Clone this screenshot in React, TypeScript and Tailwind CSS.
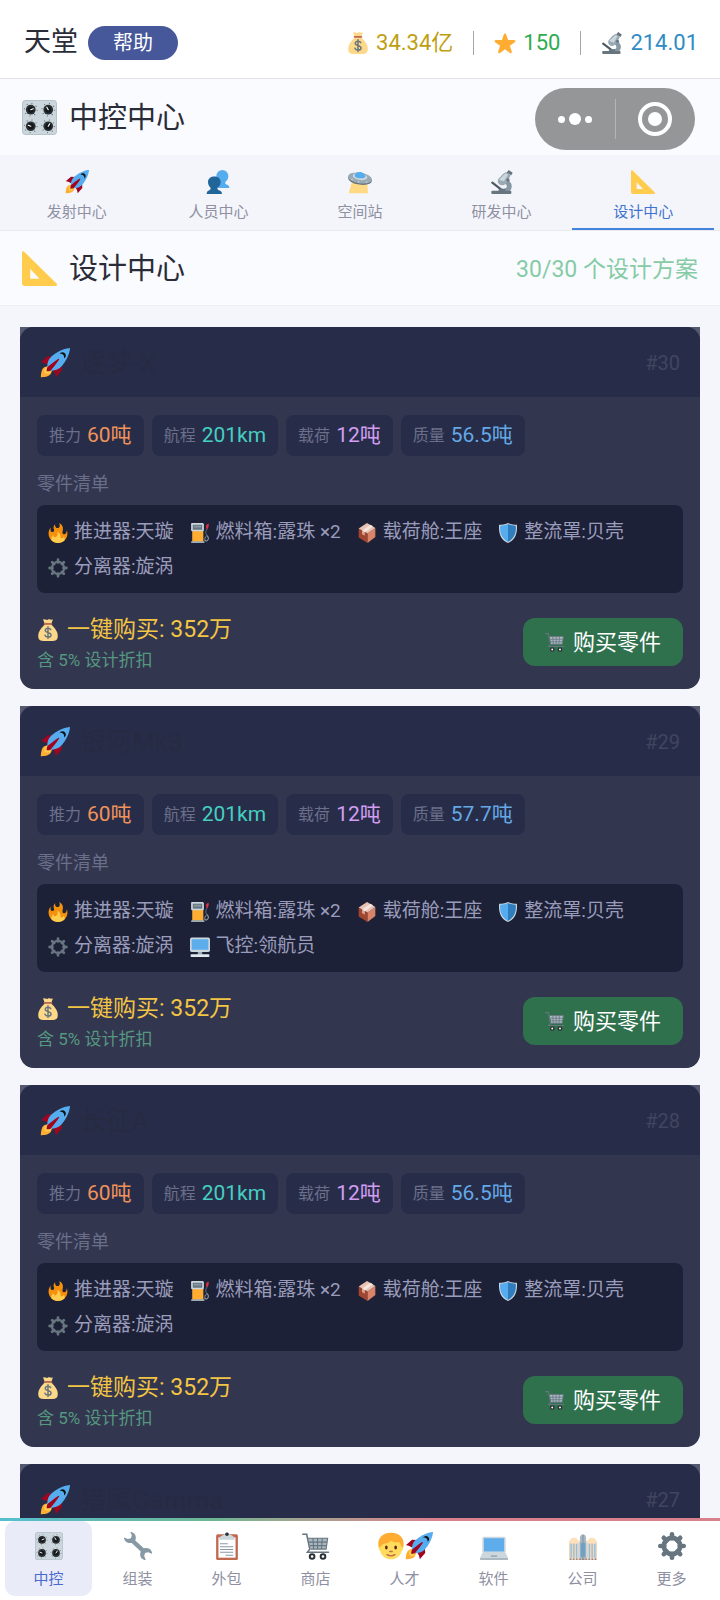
import React from 'react';

interface IconProps {
  className?: string;
}

const Svg: React.FC<IconProps & { children: React.ReactNode; viewBox?: string }> = ({
  className = '',
  viewBox = '0 0 36 36',
  children,
}) => (
  <svg viewBox={viewBox} className={`shrink-0 ${className}`} aria-hidden="true">
    {children}
  </svg>
);

const Rocket: React.FC<IconProps> = (props) => (
  <Svg {...props}>
    <path fill="#A0041E" d="M1 17l8-7 16 1 1 16-7 8s0-6-6-12-12-6-12-6z" />
    <path fill="#FFAC33" d="M1 35s0-8 3-11 11-2.800 11-2.800S15 29 12 32s-11 3-11 3z" />
    <circle fill="#FFCC4D" cx="9" cy="27" r="4" />
    <path fill="#55ACEE" d="M36 0S26 0 14 10c-6 5-6 14-4 16s11 2 16-4C36 10 36 0 36 0z" />
    <path fill="#111" d="M27 5c-1.620 0-3.010.970-3.640 2.360.500-.230 1.050-.360 1.640-.360 2.210 0 4 1.790 4 4 0 .590-.130 1.140-.360 1.640C30.030 12.010 31 10.620 31 9c0-2.210-1.790-4-4-4z" />
    <path fill="#A0041E" d="M8 28s0-4 1-5 13-11 14-10-9 13-10 14-5 1-5 1z" />
  </Svg>
);

const Knobs: React.FC<IconProps> = (props) => (
  <Svg {...props}>
    <rect width="36" height="36" rx="4" fill="#B5C3CB" />
    <rect x="1" y="1" width="34" height="34" rx="3" fill="#CCD6DD" />
    {[[9, 10], [27, 10], [9, 27], [27, 27]].map(([x, y]) => (
      <g key={`${x}-${y}`}>
        <circle cx={x} cy={y} r="6.500" fill="none" stroke="#66757F" strokeWidth="1.200" strokeDasharray="1 4.100" />
        <circle cx={x} cy={y} r="5" fill="#292F33" />
        <circle cx={x} cy={y} r="3" fill="#141719" />
      </g>
    ))}
    <g stroke="#fff" strokeWidth="1.200" strokeLinecap="round">
      <path d="M9 10l2.500-1M27 10l-1.500-2.500M9 27l-2.500-1M27 27l1.500-2.500" />
    </g>
  </Svg>
);

const MoneyBag: React.FC<IconProps> = (props) => (
  <Svg {...props}>
    <path fill="#FDD888" d="M13 9C8 13 2 20 2 28c0 6 3 8 8 8h16c5 0 8-2 8-8 0-8-6-15-11-19z" />
    <path fill="#FDD888" d="M10 1l3 8h10l3-8c-2-1-3 1-4 0s-3-1-4 0-3 0-4 0-2-1-4 0z" />
    <rect x="11" y="6.500" width="14" height="3" rx="1.500" fill="#BF6952" />
    <path
      fill="none"
      stroke="#67757F"
      strokeWidth="2.400"
      strokeLinecap="round"
      d="M22.500 17.500c-1-2-2.500-2.500-4.500-2.500-2.500 0-4.500 1.400-4.500 3.500 0 5 9.500 2.500 9.500 7.500 0 2.200-2.200 3.500-5 3.500-2.500 0-4.300-1-5-3M18 12.500v19.500"
    />
  </Svg>
);

const Star: React.FC<IconProps> = (props) => (
  <Svg {...props}>
    <path
      fill="#FFAC33"
      d="M27.300 34.600c-.400 0-.800-.100-1.150-.370L18 28.400l-8.130 5.830c-.700.500-1.600.500-2.310 0-.680-.500-.960-1.370-.710-2.170l3.070-9.700-8.130-5.730c-.690-.490-.980-1.370-.720-2.180.260-.800 1-1.350 1.840-1.360l10.100-.020 3.140-9.480c.270-.790 1.010-1.320 1.850-1.320s1.580.530 1.850 1.320l3.150 9.480 10.020.020c.840.010 1.580.560 1.840 1.360.260.810-.030 1.690-.720 2.180l-8.130 5.730 3.070 9.700c.250.800-.030 1.670-.710 2.170-.340.260-.750.380-1.160.380z"
    />
  </Svg>
);

const Microscope: React.FC<IconProps> = (props) => (
  <Svg {...props}>
    <path fill="#8899A6" d="M20 33h8c6-4 7-14-2-18l-4 5c5 3 4 8-2 9z" />
    <rect x="2" y="31" width="30" height="5" rx="1.500" fill="#67757F" />
    <path stroke="#4D5A63" strokeWidth="3.500" strokeLinecap="round" d="M3.500 19l13 10" />
    <path fill="#67757F" d="M13 28h10v4H13z" />
    <path fill="#99AAB5" d="M12 15c0-3 4-4 6-8l6-4 7 5-6 11c-3 4-7 5-10 3s-4-4-3-7z" />
    <path fill="#CCD6DD" d="M14 15c0-2 4-4 6-7l4-3 3 2-6 10z" />
    <path fill="#67757F" d="M25 4l3-4 6 4-2 4z" />
    <circle cx="27" cy="15" r="2.500" fill="#67757F" />
  </Svg>
);

const People: React.FC<IconProps> = (props) => (
  <Svg {...props}>
    <ellipse cx="24.500" cy="9.500" rx="9" ry="9.500" fill="#55ACEE" />
    <path fill="#55ACEE" d="M20 15h9v5c0 3 6 1 6 7H18z" />
    <path fill="#269" d="M3 18c0-11 19-11 19 0 0 4-2 7-5 9 0 5 7 2 7 9H1c0-7 6-4 6-9-2-2-4-5-4-9z" />
  </Svg>
);

const Saucer: React.FC<IconProps> = (props) => (
  <Svg {...props}>
    <path fill="#FFD983" d="M6 18L1 35h29l-1-14z" />
    <ellipse cx="18" cy="14" rx="18" ry="8" fill="#66757F" transform="rotate(8 18 14)" />
    <ellipse cx="18" cy="12" rx="18" ry="8" fill="#99AAB5" transform="rotate(8 18 12)" />
    <ellipse cx="18" cy="10" rx="11" ry="5" fill="#CCD6DD" transform="rotate(8 18 10)" />
    <path fill="#55ACEE" d="M10 9c0-9 16-7 16 1-2 4-15 3-16-1z" />
    <g fill="#CCD6DD">
      <circle cx="6" cy="14" r="1.200" />
      <circle cx="16" cy="18" r="1.200" />
      <circle cx="28" cy="18" r="1.200" />
    </g>
  </Svg>
);

const SetSquare: React.FC<IconProps> = (props) => (
  <Svg {...props}>
    <path
      fill="#FFCC4D"
      fillRule="evenodd"
      d="M2 .500C1 0 0 .500 0 2v31c0 2 1 3 3 3h31c2 0 2.500-1.500 1.500-2.500zM8.500 18.500l9.500 10h-9.500z"
    />
    <path stroke="#FFBE45" strokeWidth="1" d="M5 6l-2 2M10 11l-2 2M15 16l-2 2M20 21l-2 2M25 26l-2 2M30 31l-2 2" />
  </Svg>
);

const Fire: React.FC<IconProps> = (props) => (
  <Svg {...props}>
    <path
      fill="#F4900C"
      d="M35 19c0-2.060-.370-4.040-1.040-5.870-.460 5.390-3.330 8.160-6.330 6.870-2.820-1.200-.920-5.920-.780-8.160.240-3.810-.010-8.170-6.930-11.800 2.870 5.500.330 8.920-2.340 9.130-2.960.230-5.660-2.540-4.660-7.040-3.240 2.380-3.340 6.400-2.340 9 1.050 2.700-.040 4.950-2.580 5.200-2.840.280-4.420-3.040-2.960-8.330C2.520 10.960 1 14.800 1 19c0 9.390 7.610 17 17 17s17-7.610 17-17z"
    />
    <path
      fill="#FFCC4D"
      d="M28.400 24c.150 3.080-2.560 4.300-4.020 3.700-2.110-.840-1.540-2.290-2.090-5.290-.540-3-2.620-5.080-5.700-6 2.250 6.340-1.250 8.670-3.080 9.090-1.880.420-3.760 0-3.970-4.010C7.350 23.670 6 26.670 6 30c0 .370.020.730.050 1.090C9.120 34.120 13.340 36 18 36s8.870-1.880 11.940-4.910c.040-.360.060-.720.060-1.090 0-2.190-.590-4.240-1.600-6z"
    />
  </Svg>
);

const FuelPump: React.FC<IconProps> = (props) => (
  <Svg {...props}>
    <path fill="none" stroke="#66757F" strokeWidth="1.800" d="M25 31c7 5 10-3 6-8s-3-7 0-13" />
    <path fill="none" stroke="#99AAB5" strokeWidth="1.500" d="M27 31c-2-6 5-11 6-5 1 5-3 8-6 5z" />
    <path fill="#DD2E44" d="M29 4l4-3 1 3-2 7-3-1z" />
    <path fill="#FFAC33" d="M4 14h20v20H4z" />
    <path fill="#CCD6DD" d="M4 0h18c2 0 3 1 3 3v9c0 2-1 3-3 3H5c-2 0-3-1-3-3V3c0-2 0-3 2-3z" />
    <path fill="#66757F" d="M5 3h17v9H5z" />
    <path fill="#8899A6" d="M7 5h13v3H7z" />
    <rect x="2" y="33" width="24" height="3" rx="1" fill="#99AAB5" />
  </Svg>
);

const Crate: React.FC<IconProps> = (props) => (
  <Svg {...props}>
    <path fill="#A0452F" d="M3 10l16 9v17L3 26z" />
    <path fill="#D98468" d="M19 19l14-10v16L19 36z" />
    <path fill="#E8C3B4" d="M3 10L18 0l15 9-14 10z" />
    <path fill="#F7E6DE" d="M9 14L24 3l5 3-15 11z" />
    <path fill="#E3A592" d="M9 14l5 3v6l-5-3z" />
  </Svg>
);

const Shield: React.FC<IconProps> = (props) => (
  <Svg {...props}>
    <path fill="#CCD6DD" d="M18 0c6 3 11 3 16 3 1 12-1 27-16 33C3 30 1 15 2 3c5 0 10 0 16-3z" />
    <path fill="#55ACEE" d="M18 2c-5 2-9 3-14 3-1 12 2 23 14 29z" />
    <path fill="#2F7DBD" d="M18 2c5 2 9 3 14 3 1 12-2 23-14 29z" />
  </Svg>
);

// Eight teeth round a ring; the ring is thin in part lists, thick in the tab bar
const Gear: React.FC<IconProps & { thin?: boolean }> = ({ thin, className }) => (
  <Svg className={className}>
    <g stroke="#66757F" strokeWidth={thin ? 5 : 6} strokeLinecap="round">
      <path d="M18 3v5M18 28v5M3 18h5M28 18h5M7.500 7.500L11 11M25 25l3.500 3.500M7.500 28.500L11 25M25 11l3.500-3.500" />
    </g>
    <circle cx="18" cy="18" r={thin ? 11 : 10.5} fill="none" stroke="#66757F" strokeWidth={thin ? 4 : 6} />
  </Svg>
);

const Monitor: React.FC<IconProps> = (props) => (
  <Svg {...props}>
    <rect y="1" width="36" height="26" rx="3" fill="#CCD6DD" />
    <path fill="#5DADEC" d="M3 4h30v19H3z" />
    <path fill="#99AAB5" d="M14 27h8v5h-8z" />
    <rect x="1" y="31" width="34" height="5" rx="2" fill="#E1E8ED" />
  </Svg>
);

const Cart: React.FC<IconProps> = (props) => (
  <Svg {...props}>
    <path fill="#A9B7C1" d="M8 8h25l-2 14H11z" />
    <g fill="none" stroke="#66757F" strokeWidth="1.400">
      <path d="M7 8h26l-2 14H11M8 13h24M10 17.500h22M14 8l1 14M20 8v14M26 8l-1 14" />
    </g>
    <path fill="none" stroke="#66757F" strokeWidth="2" strokeLinecap="round" d="M1 3h5l4 19-3 4h27" />
    <g fill="#fff" stroke="#292F33" strokeWidth="2.500">
      <circle cx="13" cy="31.500" r="3" />
      <circle cx="27" cy="31.500" r="3" />
    </g>
  </Svg>
);

const Wrench: React.FC<IconProps> = (props) => (
  <Svg {...props}>
    <path
      fill="#8899A6"
      d="M8 0c5 0 8 4 7 9l-.500 2 11 10c4-1 7 0 9 2 1 2 2 3 1.500 5l-5-2-4 1-1 4 2 5c-5 0-8-4-7-9l.500-2L10 14C5 15 0 12 0 7l5 2 4-1 1-4z"
    />
  </Svg>
);

const Clipboard: React.FC<IconProps> = (props) => (
  <Svg {...props}>
    <rect x="4" y="3" width="28" height="33" rx="2" fill="#C1694F" />
    <path fill="#fff" d="M7 7h22v26H7z" />
    <path fill="#CCD6DD" d="M8 10c0-4 4-6 6-6 1-5 7-5 8 0 2 0 6 2 6 6z" />
    <circle cx="18" cy="3" r="2.200" fill="#292F33" />
    <path stroke="#8899A6" strokeWidth="1.300" d="M9 15h10M9 19h17M9 22.500h17M9 26h17M16 30h10" />
  </Svg>
);

const Face: React.FC<IconProps> = (props) => (
  <Svg {...props}>
    <path fill="#FFDC5D" d="M4 17c0-11 28-11 28 0 3 1 2 6 0 7-2 7-7 11-14 11S6 31 4 24c-2-1-3-6 0-7z" />
    <path fill="#FFAC33" d="M2 19C0 7 8 1 18 1s18 6 16 18l-2 1c-1-3-2-5-4-7-3 1-7 1-10-2-2 3-6 4-9 4-3 1-4 3-5 5z" />
    <g fill="#662113">
      <ellipse cx="12" cy="20" rx="1.700" ry="2.500" />
      <ellipse cx="24" cy="20" rx="1.700" ry="2.500" />
    </g>
    <path fill="none" stroke="#C1694F" strokeWidth="1.800" strokeLinecap="round" d="M16.500 25h3M13 29c3 2 7 2 10 0" />
  </Svg>
);

const Laptop: React.FC<IconProps> = (props) => (
  <Svg {...props}>
    <rect x="3" y="6" width="30" height="21" rx="2" fill="#CCD6DD" />
    <path fill="#5DADEC" d="M5 8h26v17H5z" />
    <path fill="#CCD6DD" d="M3 27h30l3 6H0z" />
    <path fill="#99AAB5" d="M14 30h8v2h-8z" />
    <rect y="33" width="36" height="3" rx="1" fill="#AAB8C2" />
  </Svg>
);

const Building: React.FC<IconProps> = (props) => (
  <Svg {...props}>
    <path fill="#D1D8DC" d="M0 12h36v24H0z" />
    <path fill="#FFE0BC" d="M0 15c0-10 13-10 13 0zM23 15c0-10 13-10 13 0z" />
    <path fill="#8CBFE0" d="M1 15h11v18H1zM24 15h11v18H24z" />
    <path stroke="#F4D7B8" strokeWidth="1.800" d="M1 14v21M4.500 14v21M8 14v21M11.500 14v21M24.500 14v21M28 14v21M31.500 14v21M35 14v21" />
    <path fill="#AAB8C2" d="M14 36V8c0-7 8-7 8 0v28z" />
    <path fill="#66A5CE" d="M15 14h6v18h-6z" />
    <path stroke="#8899A6" strokeWidth="1.500" d="M18 4v32" />
    <path stroke="#A98070" strokeWidth="2" strokeDasharray="2 2" d="M1 35h34" />
  </Svg>
);

type Icon = React.FC<IconProps>;

const ThinGear: Icon = (props) => <Gear {...props} thin />;

const tabs: { label: string; icon: Icon }[] = [
  { label: '发射中心', icon: Rocket },
  { label: '人员中心', icon: People },
  { label: '空间站', icon: Saucer },
  { label: '研发中心', icon: Microscope },
  { label: '设计中心', icon: SetSquare },
];

const navItems: { label: string; icons: Icon[] }[] = [
  { label: '中控', icons: [Knobs] },
  { label: '组装', icons: [Wrench] },
  { label: '外包', icons: [Clipboard] },
  { label: '商店', icons: [Cart] },
  { label: '人才', icons: [Face, Rocket] },
  { label: '软件', icons: [Laptop] },
  { label: '公司', icons: [Building] },
  { label: '更多', icons: [Gear] },
];

interface Part {
  icon: Icon;
  text: string;
}

interface Design {
  id: number;
  name: string;
  details?: { mass: string; parts: Part[] };
}

const baseParts: Part[] = [
  { icon: Fire, text: '推进器:天璇' },
  { icon: FuelPump, text: '燃料箱:露珠 ×2' },
  { icon: Crate, text: '载荷舱:王座' },
  { icon: Shield, text: '整流罩:贝壳' },
  { icon: ThinGear, text: '分离器:旋涡' },
];

const designs: Design[] = [
  { id: 30, name: '逐梦-X', details: { mass: '56.5吨', parts: baseParts } },
  {
    id: 29,
    name: '银河Mk3',
    details: { mass: '57.7吨', parts: [...baseParts, { icon: Monitor, text: '飞控:领航员' }] },
  },
  { id: 28, name: '长征A', details: { mass: '56.5吨', parts: baseParts } },
  { id: 27, name: '猎鹰Gamma' },
];

const Stat: React.FC<{ label: string; value: string; color: string }> = ({ label, value, color }) => (
  <div className="flex h-[41px] items-center gap-1.5 rounded-lg bg-[#272d49] px-3">
    <span className="text-base text-[#6b6f8a]">{label}</span>
    <span className={`text-[21px] ${color}`}>{value}</span>
  </div>
);

const DesignCard: React.FC<{ design: Design }> = ({ design }) => (
  <article className="shrink-0 overflow-hidden rounded-b-[14px] bg-[#555970]">
    <div className="rounded-[14px] bg-[#33364f]">
      <div className="flex h-[70px] items-center justify-between rounded-t-[14px] bg-[#272d49] px-5 pt-0.5">
        <div className="flex items-center gap-2.5">
          <Rocket className="h-[30px] w-[30px]" />
          <h3 className="text-[26px] text-[#262b42]">{design.name}</h3>
        </div>
        <span className="text-xl text-[#414560]">#{design.id}</span>
      </div>

      {design.details && (
        <div className="px-[17px] pt-[18px] pb-[17px]">
          <div className="flex flex-wrap gap-2">
            <Stat label="推力" value="60吨" color="text-[#f0935a]" />
            <Stat label="航程" value="201km" color="text-[#45cfc0]" />
            <Stat label="载荷" value="12吨" color="text-[#d39df2]" />
            <Stat label="质量" value={design.details.mass} color="text-[#64a9e6]" />
          </div>

          <h4 className="mt-[17px] mb-2.5 text-lg leading-[22px] text-[#6b6f8a]">零件清单</h4>
          <ul className="flex flex-wrap gap-x-4 rounded-lg bg-[#1d2137] px-[11px] pt-2.5 pb-2">
            {design.details.parts.map(({ icon: PartIcon, text }) => (
              <li key={text} className="flex h-[35px] items-center gap-1.5 text-[19px] text-[#9a9cbb]">
                <PartIcon className="h-5 w-5" />
                {text}
              </li>
            ))}
          </ul>

          <div className="mt-[19px] flex items-center justify-between">
            <div className="flex flex-col gap-0.5 pt-0.5">
              <p className="flex items-center gap-2 text-[23px] leading-8 text-[#f2c544]">
                <MoneyBag className="h-[22px] w-[22px]" />
                一键购买: 352万
              </p>
              <p className="text-[17px] leading-6 text-[#559880]">含 5% 设计折扣</p>
            </div>
            <button className="flex h-12 items-center gap-2 rounded-xl bg-[#2f714d] px-[22px] text-[22px] text-white">
              <Cart className="h-5 w-5" />
              购买零件
            </button>
          </div>
        </div>
      )}
    </div>
  </article>
);

const App: React.FC = () => {
  return (
    <div className="flex h-screen flex-col bg-[#f4f6fb] font-['Roboto','Noto_Sans_CJK_SC',sans-serif] font-normal text-[#2a2d38]">
      {/* Player resources */}
      <header className="flex h-[79px] shrink-0 items-center justify-between border-b border-[#e2e3ea] bg-white pr-[22px] pl-6 pt-[7px]">
        <div className="flex items-center gap-2.5">
          <span className="text-[27px]">天堂</span>
          <button className="h-[34px] rounded-full bg-[#46579a] px-[25px] text-xl text-white">帮助</button>
        </div>
        <div className="flex items-center gap-5 text-[22px]">
          <span className="flex items-center gap-[7px] text-[#bf9f12]">
            <MoneyBag className="h-[22px] w-[22px]" />
            34.34亿
          </span>
          <span className="h-6 w-px bg-[#a5a6ab]"></span>
          <span className="flex items-center gap-[7px] text-[#2eac50]">
            <Star className="h-[22px] w-[22px]" />
            150
          </span>
          <span className="h-6 w-px bg-[#a5a6ab]"></span>
          <span className="flex items-center gap-[7px] text-[#2f8bc4]">
            <Microscope className="h-[22px] w-[22px]" />
            214.01
          </span>
        </div>
      </header>

      <div className="flex h-[76px] shrink-0 items-center justify-between bg-[#fafbff] pr-[25px] pl-[22px]">
        <div className="flex items-center gap-3">
          <Knobs className="h-[35px] w-[35px]" />
          <h1 className="pt-1 text-[29px]">中控中心</h1>
        </div>
        <div className="mt-1 flex h-[62px] w-40 items-center rounded-full bg-[#959698]">
          <button aria-label="菜单" className="flex h-full flex-1 items-center justify-center gap-1">
            <span className="h-[7px] w-[7px] rounded-full bg-white"></span>
            <span className="h-3 w-3 rounded-full bg-white"></span>
            <span className="h-[7px] w-[7px] rounded-full bg-white"></span>
          </button>
          <span className="h-10 w-px bg-[#b4b5b7]"></span>
          <button aria-label="关闭" className="flex h-full flex-1 items-center justify-center">
            <span className="flex h-[34px] w-[34px] items-center justify-center rounded-full border-4 border-white">
              <span className="h-3.5 w-3.5 rounded-full bg-white"></span>
            </span>
          </button>
        </div>
      </div>

      <nav className="flex h-[76px] shrink-0 border-b border-[#e8e9ef] bg-[#f4f5fb] px-1.5">
        {tabs.map(({ label, icon: TabIcon }) => {
          const active = label === '设计中心';
          return (
            <button
              key={label}
              className={`flex flex-1 flex-col items-center gap-[7px] border-b-2 pt-[15px] text-[15px] leading-[22px] ${
                active ? 'border-[#4383db] text-[#3f74cf]' : 'border-transparent text-[#8e90a2]'
              }`}
            >
              <TabIcon className="h-6 w-6" />
              {label}
            </button>
          );
        })}
      </nav>

      <div className="flex h-[75px] shrink-0 items-center justify-between border-b border-[#eeeff4] bg-[#fafbff] px-[22px]">
        <div className="flex items-center gap-3">
          <SetSquare className="h-[35px] w-[35px]" />
          <h2 className="pt-1 text-[29px]">设计中心</h2>
        </div>
        <span className="pt-1 text-[23px] text-[#86cba6]">30/30 个设计方案</span>
      </div>

      <main className="flex min-h-0 flex-1 flex-col gap-[17px] overflow-y-auto px-5 pt-[21px] [scrollbar-width:none]">
        {designs.map((design) => (
          <DesignCard key={design.id} design={design} />
        ))}
      </main>

      {/* Bottom navigation */}
      <footer className="shrink-0 bg-white">
        <div className="h-[3px] bg-linear-to-r from-[#55bfd0] via-[#6db592] via-30% to-[#d9808d] to-60%"></div>
        <nav className="flex gap-0.5 px-[5px] pb-1">
          {navItems.map(({ label, icons }) => (
            <button
              key={label}
              className={`flex h-[75px] flex-1 flex-col items-center gap-2 rounded-[10px] pt-[11px] text-[15px] leading-[22px] ${
                label === '中控' ? 'bg-[#e9ebf8] text-[#4a69cf]' : 'text-[#8e90a2]'
              }`}
            >
              <span className="flex">
                {icons.map((NavIcon, i) => (
                  <NavIcon key={i} className="h-7 w-7" />
                ))}
              </span>
              {label}
            </button>
          ))}
        </nav>
      </footer>
    </div>
  );
};

export default App;
